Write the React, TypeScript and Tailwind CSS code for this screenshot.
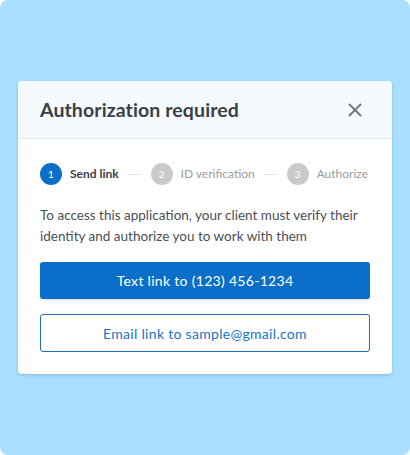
import { X } from 'lucide-react';

const font = { fontFamily: 'Lato, "Noto Sans", sans-serif' };

function Step({ n, label, active }: { n: number; label: string; active?: boolean }) {
  return (
    <div className="flex shrink-0 items-center gap-2 whitespace-nowrap">
      <span
        className={`flex h-[22px] w-[22px] items-center justify-center rounded-full text-[10px] text-white ${
          active ? 'bg-[#0b6fc9]' : 'bg-[#c9cacc]'
        }`}
      >
        {n}
      </span>
      <span className={`text-[12px] ${active ? 'font-bold text-[#3b4047]' : 'text-[#9a9da1]'}`}>{label}</span>
    </div>
  );
}

function Line() {
  return <div className="mx-[9px] h-px flex-1 bg-[#e1e8ef]" />;
}

export default function App() {
  return (
    <div className="h-[455px] w-[410px] bg-white" style={font}>
      <div className="flex h-full w-full items-center justify-center rounded-lg bg-[#a9dffe]">
        <div className="w-[374px] overflow-hidden rounded bg-white shadow-[0_1px_3px_rgba(40,70,110,0.25)]">
          <div className="flex h-[58px] items-center justify-between border-b border-[#dfe7ee] bg-[#f5faff] pl-[22px] pr-[26px]">
            <h2 className="text-[19.5px] font-bold tracking-[0.1px] text-[#3a3f46]">Authorization required</h2>
            <X className="h-[22px] w-[22px] text-[#6d7884]" strokeWidth={2} />
          </div>
          <div className="px-[22px] pb-[22px] pt-[24px]">
            <div className="flex items-center pr-[2px]">
              <Step n={1} label="Send link" active />
              <Line />
              <Step n={2} label="ID verification" />
              <Line />
              <Step n={3} label="Authorize" />
            </div>
            <p className="mt-[20px] text-[13.5px] leading-[21px] text-[#4a4f56]">
              To access this application, your client must verify their identity and authorize you to work with them
            </p>
            <button className="mt-[15px] flex h-[37px] w-full items-center justify-center rounded-[3px] bg-[#0b6fc9] text-[14px] tracking-[0.3px] text-white shadow-[0_1px_2px_rgba(0,0,0,0.15)]">
              Text link to (123) 456-1234
            </button>
            <button className="mt-[15px] flex h-[38px] w-full items-center justify-center rounded-[3px] border border-[#1a6fc4] bg-white text-[14px] tracking-[0.3px] text-[#1a73c9]">
              Email link to sample@gmail.com
            </button>
          </div>
        </div>
      </div>
    </div>
  );
}
